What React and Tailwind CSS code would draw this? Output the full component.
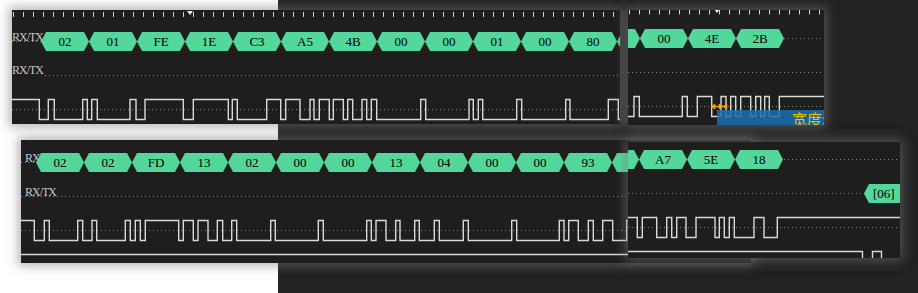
import React from "react";

const GREEN = "bg-[#53d79a]";

function wavePath(trans, startHigh, x0, x1, hy, ly, off) {
  let high = startHigh;
  let d = `M${x0 - off} ${high ? hy : ly}`;
  for (const t of trans) {
    high = !high;
    d += ` H${(t - off).toFixed(1)} V${high ? hy : ly}`;
  }
  d += ` H${x1 - off}`;
  return d;
}

function Chip({ t, extra = "" }) {
  return (
    <div
      className={`w-[48px] h-[19px] shrink-0 ${GREEN} [clip-path:polygon(5px_0,43px_0,48px_50%,43px_100%,5px_100%,0_50%)] flex items-center justify-center text-[13px] leading-none text-black ${extra}`}
    >
      {t}
    </div>
  );
}

function Dotted({ y, from = 0 }) {
  return (
    <svg className="absolute inset-0 w-full h-full pointer-events-none">
      <line x1={from} x2="100%" y1={y} y2={y} stroke="#8c8c8c" strokeWidth="1" strokeDasharray="1 3" />
    </svg>
  );
}

function Ruler({ h, start, count, y1, y2, marker }) {
  return (
    <svg className={`w-full ${h} shrink-0`}>
      {Array.from({ length: count }).map((_, i) => (
        <line key={i} x1={start + i * 10 + 0.5} x2={start + i * 10 + 0.5} y1={y1} y2={y2} stroke="#d4d4d4" strokeWidth="1" />
      ))}
      <polygon points={`${marker - 3},${y1 - 1} ${marker + 3},${y1 - 1} ${marker},${y1 + 3}`} fill="#f2f2f2" />
    </svg>
  );
}

const SH = "shadow-[0_0_10px_3px_rgba(120,120,120,0.55)]";
const FONT = "font-['Liberation_Serif','DejaVu_Serif',serif]";
const LABEL = "whitespace-nowrap text-[12px] leading-[12px] tracking-[-1px] text-[#c6c6c6]";

const P1W = [39.3, 48.3, 54.3, 82.7, 87.3, 91.7, 97.3, 130, 136, 145, 183.3, 193.3, 228.3, 232.3, 237.3, 266.7, 280.7, 285.7, 300, 310, 314, 319.3, 329.3, 333.3, 343.3, 347.7, 352.7, 362, 366.7, 371.3, 376.7, 420.7, 425.7, 469, 473.3, 478.3, 482.7, 516.7, 521.7, 565.7, 570, 608.3, 618.3];
const P2W = [634, 639.3, 682.3, 687.3, 697.3, 711.7, 721, 726, 730.7, 735.7, 740.7, 750.7, 755.7, 760.7, 764.7, 769.3, 779.3];
const P3W = [34.3, 44.3, 49.3, 77.7, 82.7, 92, 96.7, 125.3, 130.3, 135.3, 140.3, 145.3, 178.7, 183.3, 193.3, 198, 208, 217.3, 222.7, 231.7, 236.7, 270.7, 275.3, 318.3, 323.3, 366.7, 371.3, 376, 386, 395.7, 400, 414.7, 419.3, 434.3, 439.3, 463.3, 468.3, 511.7, 516.7, 559.3, 564, 568.7, 578.3, 588.3, 593.3, 602.7, 612.7, 626.7];
const P4W = [637.3, 642.3, 656.7, 666.7, 671.7, 676.7, 686, 696, 715, 719.3, 724.3, 729.3, 734.3, 754, 764, 777.3];

const C1 = ["02", "01", "FE", "1E", "C3", "A5", "4B", "00", "00", "01", "00", "80", ""];
const C3 = ["02", "02", "FD", "13", "02", "00", "00", "13", "04", "00", "00", "93", ""];

function WaveSvg({ d, mid, extra }) {
  return (
    <svg className="absolute inset-0 w-full h-full">
      <line x1="0" x2="100%" y1={mid} y2={mid} stroke="#8c8c8c" strokeWidth="1" strokeDasharray="1 3" />
      <path d={d} fill="none" stroke="#d9d9d9" strokeWidth="1.4" />
      {extra}
    </svg>
  );
}

export default function App() {
  return (
    <div className={`relative w-[918px] h-[293px] overflow-hidden flex bg-[#222222] ${FONT}`}>
      <div className="w-[278px] h-full bg-white shrink-0" />
      <div className="flex-1 h-full bg-[#222222]" />

      {/* Panel 1 */}
      <div className={`absolute left-[12px] top-[10px] w-[608px] h-[114px] bg-[#1e1e1e] overflow-hidden flex flex-col ${SH}`}>
        <Ruler h="h-[8px]" start={1} count={61} y1={2} y2={7} marker={178} />
        <div className="relative h-[40px] shrink-0 pt-[14px]">
          <Dotted y={23.5} />
          <div className="relative flex items-start">
            <span className={`w-[29px] shrink-0 mt-[-1px] ${LABEL}`}>RX/TX</span>
            {C1.map((c, i) => (
              <Chip key={i} t={c} />
            ))}
          </div>
        </div>
        <div className="relative h-[34px] shrink-0 pt-[6px]">
          <Dotted y={17.5} from={33} />
          <div className="relative flex items-start">
            <span className={LABEL}>RX/TX</span>
          </div>
        </div>
        <div className="relative h-[32px] shrink-0">
          <WaveSvg d={wavePath(P1W, true, 12, 620, 7.5, 27.5, 12)} mid={17.5} />
        </div>
      </div>

      {/* Panel 2 */}
      <div className={`absolute left-[628px] top-[10px] w-[196px] h-[115px] bg-[#1e1e1e] overflow-hidden flex flex-col ${SH}`}>
        <Ruler h="h-[6px]" start={1} count={20} y1={0} y2={4.5} marker={89} />
        <div className="relative h-[40px] shrink-0 pt-[13px]">
          <Dotted y={22.5} />
          <div className="relative flex items-start ml-[-36px]">
            {["01", "00", "4E", "2B"].map((c, i) => (
              <Chip key={i} t={c} />
            ))}
          </div>
        </div>
        <div className="relative h-[33px] shrink-0">
          <Dotted y={16.5} />
        </div>
        <div className="relative h-[36px] shrink-0">
          <WaveSvg
            d={wavePath(P2W, false, 628, 824, 7.5, 27.5, 628)}
            mid={17.5}
            extra={
              <g fill="#f2a900" stroke="#f2a900">
                <line x1="84" x2="98" y1="17.5" y2="17.5" strokeWidth="1.5" />
                <polygon points="83,17.5 87,15 87,20" strokeWidth="0.5" />
                <polygon points="91,15 95,17.5 91,20" strokeWidth="0.5" />
                <polygon points="99,15 95,17.5 99,20" strokeWidth="0.5" />
              </g>
            }
          />
          <div className="absolute left-[89px] right-0 bottom-0 h-[15px] bg-[#1a6fb0]/85 overflow-hidden">
            <span className="block pl-[75px] whitespace-nowrap text-[15px] leading-[17px] text-[#f0c000] font-['Noto_Sans_CJK_SC',sans-serif]">
              宽度:
            </span>
          </div>
        </div>
      </div>

      {/* Panel 3 */}
      <div className={`absolute left-[21px] top-[140px] w-[730px] h-[123px] bg-[#1e1e1e] overflow-hidden flex flex-col ${SH}`}>
        <div className="relative h-[40px] shrink-0 pt-[13px]">
          <Dotted y={22.5} />
          <div className="relative flex items-start">
            <span className={`ml-[4px] w-[11px] shrink-0 mt-[-1px] ${LABEL}`}>RX/TX</span>
            {C3.map((c, i) => (
              <Chip key={i} t={c} />
            ))}
          </div>
        </div>
        <div className="relative h-[32px] shrink-0 pt-[6px]">
          <Dotted y={16.5} />
          <div className="relative flex items-start pl-[4px]">
            <span className={LABEL}>RX/TX</span>
          </div>
        </div>
        <div className="relative h-[51px] shrink-0">
          <WaveSvg d={wavePath(P3W, true, 21, 751, 8.5, 28.5, 21)} mid={18.5} />
          <svg className="absolute inset-0 w-full h-full">
            <line x1="0" x2="100%" y1="42.5" y2="42.5" stroke="#d9d9d9" strokeWidth="1.4" />
          </svg>
        </div>
      </div>

      {/* Panel 4 */}
      <div className={`absolute left-[628px] top-[142px] w-[272px] h-[116px] bg-[#1e1e1e] overflow-hidden flex flex-col ${SH}`}>
        <div className="relative h-[34px] shrink-0 pt-[8px]">
          <Dotted y={17.5} />
          <div className="relative flex items-start ml-[-37px]">
            {["", "A7", "5E", "18"].map((c, i) => (
              <Chip key={i} t={c} />
            ))}
          </div>
        </div>
        <div className="relative h-[34px] shrink-0 pt-[8px]">
          <Dotted y={17.5} />
          <div className="relative flex items-start ml-[236px]">
            <Chip t="[06]" extra="!justify-start pl-[9px]" />
          </div>
        </div>
        <div className="relative h-[48px] shrink-0">
          <WaveSvg d={wavePath(P4W, true, 628, 900, 7.5, 27.5, 628)} mid={17.5} />
          <svg className="absolute inset-0 w-full h-full">
            <path d="M0 41.5 H234.5 V52 M244.5 52 V41.5 H253.5 V52" fill="none" stroke="#d9d9d9" strokeWidth="1.4" />
          </svg>
        </div>
      </div>
    </div>
  );
}
